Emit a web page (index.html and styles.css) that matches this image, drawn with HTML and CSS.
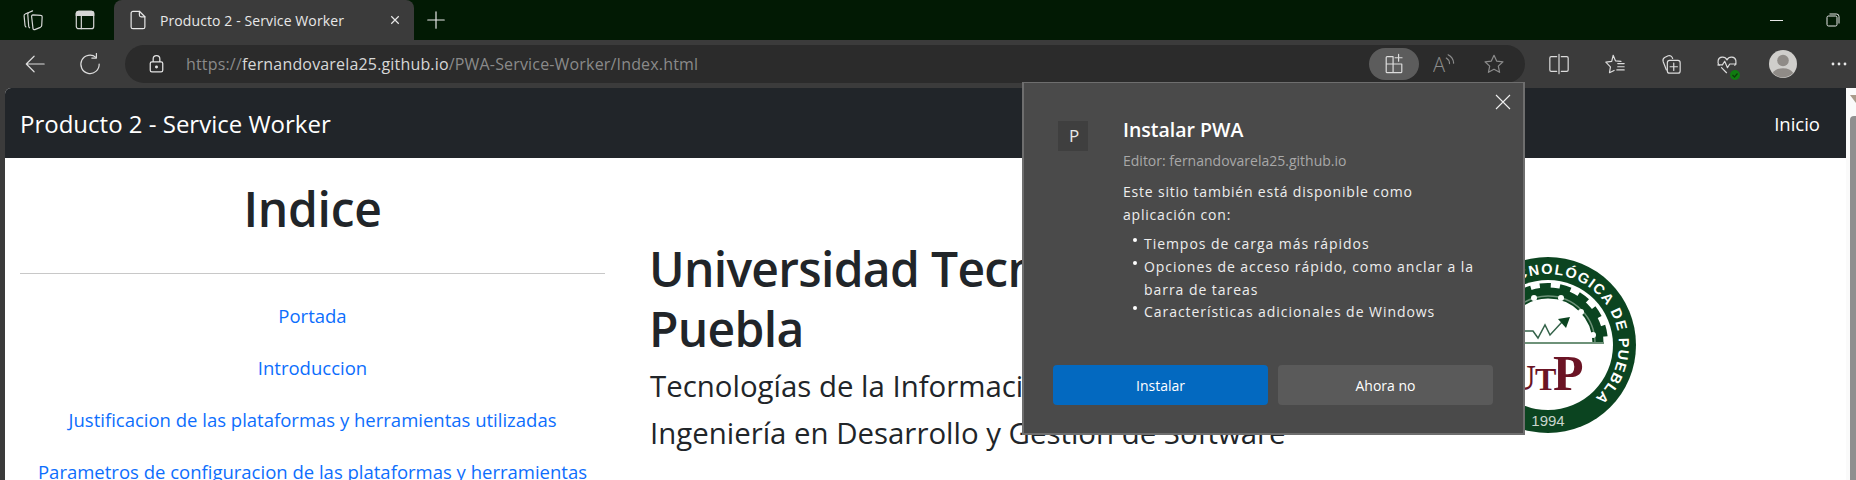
FILE: index.html
```html
<!DOCTYPE html>
<html lang="es">
<head>
    <meta charset="UTF-8">
    <meta name="viewport" content="width=device-width, initial-scale=1.0">
    <title>Producto 2 - Service Worker</title>
    <link rel="stylesheet" href="styles.css">
</head>
<body>
    <!-- Title bar -->
    <div class="titlebar">
        <button class="bar-btn">
            <svg class="icon" viewBox="0 0 24 24"><path d="M7 4 3.500 5.500c-1 .4-1.300 1-1.200 2l1 10.500c.1.800.4 1.200 1 1.600"/><path d="M11.500 2 7.500 3.800c-1 .4-1.300 1-1.200 2l1 13c.1.800.4 1.300 1 1.700"/><path d="M12 6.500l8.500.5c1 0 1.500.6 1.500 1.500l-.5 9.500c0 1-.5 1.500-1.500 2l-6 2.500c-1 .3-1.800-.2-2-1.200L10.500 8.500c-.1-1.200.4-2 1.500-2z"/></svg>
        </button>
        <button class="bar-btn">
            <svg class="icon" viewBox="0 0 24 24"><rect x="2.500" y="2.500" width="19" height="19" rx="2.500"/><path d="M2.500 7h19V5A2.500 2.500 0 0 0 19 2.500H5A2.500 2.500 0 0 0 2.500 5z" fill="currentColor"/><path d="M8 7v14.500"/></svg>
        </button>
        <div class="tab">
            <svg class="icon tab-icon" viewBox="0 0 24 24"><path d="M6.500 2.500h7l6 6v11a2 2 0 0 1-2 2h-11a2 2 0 0 1-2-2v-15a2 2 0 0 1 2-2z"/><path d="M13.500 2.500v4a2 2 0 0 0 2 2h4"/></svg>
            <span class="tab-title">Producto 2 - Service Worker</span>
            <svg class="tab-close" viewBox="0 0 12 12"><path d="M1.500 1.500l9 9M10.500 1.500l-9 9"/></svg>
        </div>
        <button class="new-tab">
            <svg class="icon" viewBox="0 0 24 24"><path d="M12 3v18M3 12h18"/></svg>
        </button>
        <div class="window-btns">
            <div class="win-btn"><span class="win-min"></span></div>
            <div class="win-btn">
                <svg class="win-restore" viewBox="0 0 14 14"><rect x="1" y="3" width="10" height="10" rx="1.500"/><path d="M3.500 1h7A2.500 2.500 0 0 1 13 3.500v7"/></svg>
            </div>
        </div>
    </div>

    <!-- Toolbar -->
    <div class="toolbar">
        <button class="tool-btn back">
            <svg class="icon" viewBox="0 0 24 24"><path d="M22 12H2.500M11 3.500 2.500 12l8.500 8.500"/></svg>
        </button>
        <button class="tool-btn">
            <svg class="icon" viewBox="0 0 24 24"><path d="M18.500 4.800A10 10 0 1 0 22 12"/><path d="M19 .5v5h-5"/></svg>
        </button>
        <div class="address">
            <svg class="lock" viewBox="0 0 20 24"><rect x="2.500" y="9.500" width="15" height="12" rx="2"/><path d="M6 9.500V6a4 4 0 0 1 8 0v3.500"/><circle cx="10" cy="15.500" r="1" fill="currentColor"/></svg>
            <div class="url"><span class="url-dim">https://</span>fernandovarela25.github.io<span class="url-dim">/PWA-Service-Worker/Index.html</span></div>
            <div class="address-tools">
                <button class="addr-btn active">
                    <svg class="icon" viewBox="0 0 24 24"><path d="M11 4H4.500a1 1 0 0 0-1 1v15.500a1 1 0 0 0 1 1h15a1 1 0 0 0 1-1V12H3.500M11 4v17.500"/><path d="M17 1.500v7.500M13.200 5.200h7.600"/></svg>
                </button>
                <button class="addr-btn dim">
                    <svg class="icon" viewBox="0 0 24 24"><text class="aloud-a" x="0" y="21">A</text><path d="M14.500 5.500a7 7 0 0 1 3.500 6M16.500 2a11 11 0 0 1 6 9"/></svg>
                </button>
                <button class="addr-btn dim">
                    <svg class="icon" viewBox="0 0 24 24"><path d="M12 2.500l2.900 6.300 6.900.8-5.100 4.700 1.400 6.800-6.100-3.400-6.100 3.400 1.400-6.800-5.100-4.700 6.900-.8z"/></svg>
                </button>
            </div>
        </div>
        <div class="tools">
            <button class="tool-btn">
                <svg class="icon" viewBox="0 0 24 24"><path d="M9.500 4H3.500a1.500 1.500 0 0 0-1.500 1.500v13A1.500 1.500 0 0 0 3.500 20h6M14.500 4h6A1.500 1.500 0 0 1 22 5.500v13a1.500 1.500 0 0 1-1.500 1.500h-6M12 1.500v21"/></svg>
            </button>
            <button class="tool-btn">
                <svg class="icon" viewBox="0 0 24 24"><path d="M10 2.500l2.500 6 6 .7M8.400 9.100 2 10l5 5.200-1 6.300 5-2.500M10 2.500 8.400 9.100M15 11.500h7M15 15h7M14 18.500h8"/></svg>
            </button>
            <button class="tool-btn">
                <svg class="icon" viewBox="0 0 24 24"><path d="M7 18.500l-3.500-9C3 8 3.500 6 5 5l4-2c2-.7 4 .2 4.800 3"/><rect x="8" y="8" width="14" height="14" rx="2.500"/><path d="M15 11v8M11 15h8"/></svg>
            </button>
            <button class="tool-btn heart-btn">
                <svg class="icon" viewBox="0 0 24 24"><path d="M3.500 13.500C1 10 2 5 6.500 4.500 9 4.200 11 5.500 12 7.500c1-2 3-3.300 5.500-3 4.500.5 5.500 5.500 3 9"/><path d="M2 13h5l2.500-4 3 7 2.500-4h7M6 16l5.500 5.500"/></svg>
                <span class="check">
                    <svg viewBox="0 0 10 10"><path d="M2.500 5l2 2 3-3.500"/></svg>
                </span>
            </button>
            <button class="tool-btn">
                <svg class="avatar" viewBox="0 0 28 28"><circle cx="14" cy="14" r="14" fill="#cfcecb"/><circle cx="14" cy="10.500" r="5.800" fill="#8f8b87"/><path d="M3.800 23a11 7.500 0 0 1 20.400 0A14 14 0 0 1 3.800 23z" fill="#8f8b87"/></svg>
            </button>
            <button class="tool-btn">
                <svg class="dots" viewBox="0 0 16 4"><circle cx="2" cy="2" r="1.400"/><circle cx="8" cy="2" r="1.400"/><circle cx="14" cy="2" r="1.400"/></svg>
            </button>
        </div>
    </div>

    <!-- Page -->
    <div class="viewport">
        <div class="page">
            <nav class="navbar">
                <a class="brand">Producto 2 - Service Worker</a>
                <a class="nav-link">Inicio</a>
            </nav>
            <div class="content">
                <aside class="sidebar">
                    <h2 class="sidebar-title">Indice</h2>
                    <hr class="divider">
                    <ul class="index">
                        <li><a>Portada</a></li>
                        <li><a>Introduccion</a></li>
                        <li><a>Justificacion de las plataformas y herramientas utilizadas</a></li>
                        <li><a>Parametros de configuracion de las plataformas y herramientas</a></li>
                    </ul>
                </aside>
                <main class="cover">
                    <div class="cover-text">
                        <h1>Universidad Tecnológica de Puebla</h1>
                        <h3 class="first">Tecnologías de la Información</h3>
                        <h3>Ingeniería en Desarrollo y Gestión de Software</h3>
                    </div>
                    <svg class="logo" viewBox="0 0 176 176">
                        <defs>
                            <path id="ringText" d="M 40.500 35.200 A 71 71 0 1 1 123.500 149.500"/>
                            <clipPath id="upperHalf"><rect x="0" y="0" width="176" height="86"/></clipPath>
                        </defs>
                        <circle cx="88" cy="88" r="88" fill="#0b4420"/>
                        <circle cx="88" cy="88" r="65" fill="#fff"/>
                        <g class="logo-gear" clip-path="url(#upperHalf)">
                            <circle cx="88" cy="86" r="50" stroke-width="11"/>
                            <circle cx="88" cy="86" r="57" stroke-width="6" stroke-dasharray="11 9"/>
                        </g>
                        <path class="logo-dots" d="M41 86a47 47 0 0 1 94 0"/>
                        <circle cx="74" cy="41" r="3" fill="#fff"/>
                        <circle cx="101" cy="41" r="3" fill="#fff"/>
                        <circle cx="121" cy="55" r="3" fill="#fff"/>
                        <circle cx="133" cy="78" r="3" fill="#fff"/>
                        <rect x="22" y="85" width="122" height="2" fill="#6e9279"/>
                        <path class="logo-line" d="M40 74h33l5 7 7-13 5 10 12-13"/>
                        <path d="M110 60l-12 2 8 9z" fill="#0b4420"/>
                        <text class="logo-utp" x="50" y="133" font-size="36">U</text>
                        <text class="logo-utp" x="75" y="133" font-size="32">T</text>
                        <text class="logo-utp" x="93" y="133" font-size="50">P</text>
                        <text class="logo-ring"><textPath href="#ringText">TECNOLÓGICA DE PUEBLA</textPath></text>
                        <text class="logo-year" x="88" y="169">1994</text>
                    </svg>
                </main>
            </div>
        </div>
        <div class="scrollbar">
            <span class="scroll-arrow"></span>
            <span class="scroll-thumb"></span>
        </div>
    </div>

    <!-- Install popup -->
    <div class="popup">
        <svg class="popup-close" viewBox="0 0 16 16"><path d="M1 1l14 14M15 1L1 15"/></svg>
        <div class="popup-body">
            <div class="app-tile">P</div>
            <div class="popup-text">
                <div class="popup-title">Instalar PWA</div>
                <div class="popup-editor">Editor: fernandovarela25.github.io</div>
                <p class="popup-desc">Este sitio también está disponible como aplicación con:</p>
                <ul class="popup-list">
                    <li>Tiempos de carga más rápidos</li>
                    <li>Opciones de acceso rápido, como anclar a la barra de tareas</li>
                    <li>Características adicionales de Windows</li>
                </ul>
            </div>
        </div>
        <div class="popup-actions">
            <button class="btn btn-primary">Instalar</button>
            <button class="btn btn-secondary">Ahora no</button>
        </div>
    </div>
</body>
</html>
```

FILE: styles.css
```css
* {
    margin: 0;
    padding: 0;
    box-sizing: border-box;
}
body {
    width: 1856px;
    height: 480px;
    overflow: hidden;
    position: relative;
    background-color: #3b3b3b;
    font-family: "Open Sans", sans-serif;
    color: #212529;
}
button {
    background: none;
    border: none;
    color: inherit;
    font-family: inherit;
}
.icon {
    width: 22px;
    height: 22px;
    fill: none;
    stroke: currentColor;
    stroke-width: 1.3;
    stroke-linecap: round;
    stroke-linejoin: round;
}

/* Title bar */
.titlebar {
    display: flex;
    align-items: stretch;
    height: 40px;
    padding-left: 7px;
    background-color: #021a04;
    color: #d6d6d6;
}
.bar-btn {
    display: flex;
    justify-content: center;
    align-items: center;
    width: 52px;
}
.tab {
    display: flex;
    align-items: center;
    width: 300px;
    margin-left: 3px;
    padding-left: 13px;
    background-color: #3b3b3b;
    border-radius: 8px 8px 0 0;
    color: #e8e8e8;
}
.tab-icon {
    width: 22px;
    height: 22px;
}
.tab-title {
    width: 210px;
    margin-left: 11px;
    font-size: 14px;
    letter-spacing: 0.1px;
    white-space: nowrap;
}
.tab-close {
    width: 10px;
    height: 10px;
    margin-left: 20px;
    fill: none;
    stroke: #e8e8e8;
    stroke-width: 1.4;
}
.new-tab {
    display: flex;
    justify-content: center;
    align-items: center;
    width: 44px;
    color: #e8e8e8;
}
.window-btns {
    display: flex;
    gap: 11px;
    margin-left: auto;
}
.win-btn {
    display: flex;
    justify-content: center;
    align-items: center;
    width: 46px;
}
.win-min {
    width: 13px;
    height: 1px;
    background-color: #e8e8e8;
}
.win-restore {
    width: 14px;
    height: 14px;
    fill: none;
    stroke: #e8e8e8;
    stroke-width: 1;
}

/* Toolbar */
.toolbar {
    display: flex;
    align-items: center;
    height: 48px;
    padding-left: 15px;
    background-color: #3b3b3b;
    color: #dcdcdc;
}
.tool-btn {
    display: flex;
    justify-content: center;
    align-items: center;
    flex: none;
    width: 40px;
    height: 40px;
}
.tool-btn.back {
    margin-right: 15px;
}
.address {
    display: flex;
    align-items: center;
    flex: none;
    width: 1400px;
    height: 38px;
    margin-left: 15px;
    padding-left: 23px;
    background-color: #2b2b2b;
    border-radius: 19px;
}
.lock {
    width: 17px;
    height: 20px;
    fill: none;
    stroke: #e4e4e4;
    stroke-width: 1.5;
    color: #e4e4e4;
}
.url {
    margin-left: 21px;
    font-size: 16px;
    letter-spacing: 0.17px;
    color: #d8d8d8;
    white-space: nowrap;
}
.url-dim {
    color: #8a8a8a;
}
.address-tools {
    display: flex;
    margin-left: auto;
    padding-right: 6px;
}
.addr-btn {
    display: flex;
    justify-content: center;
    align-items: center;
    width: 50px;
    height: 32px;
    border-radius: 16px;
}
.addr-btn.active {
    background-color: #5c5c5c;
}
.addr-btn.dim {
    color: #8c8c8c;
}
.aloud-a {
    font-size: 22px;
    font-weight: 300;
    fill: currentColor;
    stroke: none;
}
.tools {
    display: flex;
    gap: 16px;
    margin-left: 14px;
}
.heart-btn {
    position: relative;
}
.check {
    position: absolute;
    right: 7px;
    bottom: 4px;
    width: 10px;
    height: 10px;
    background-color: #107c10;
    border-radius: 50%;
}
.check svg {
    display: block;
    fill: none;
    stroke: #0b3d0b;
    stroke-width: 1.2;
}
.avatar {
    width: 28px;
    height: 28px;
}
.dots {
    width: 16px;
    height: 4px;
    fill: #e8e8e8;
}

/* Page */
.viewport {
    display: flex;
    height: 392px;
    padding-left: 5px;
}
.page {
    width: 841px;
    flex: 1;
    overflow: hidden;
    background: white;
    border-top-left-radius: 6px;
}
.navbar {
    display: flex;
    justify-content: space-between;
    align-items: center;
    height: 70px;
    padding: 0 26px 0 15px;
    background-color: #212529;
    color: white;
}
.brand {
    font-size: 24px;
}
.nav-link {
    font-size: 18.500px;
}
.content {
    display: flex;
}
.sidebar {
    flex: none;
    width: 615px;
    padding: 21px 15px 0;
    text-align: center;
}
.sidebar-title {
    font-size: 48px;
    font-weight: 600;
    letter-spacing: -0.300px;
    line-height: 60px;
}
.divider {
    margin: 34px 0 16px;
    border: none;
    border-top: 1px solid #c8c8c8;
}
.index {
    list-style: none;
}
.index li {
    height: 52px;
    line-height: 52px;
    font-size: 18.500px;
    color: #0d6efd;
    white-space: nowrap;
}
.cover {
    display: flex;
    align-items: flex-start;
    padding: 81px 0 0 29px;
}
.cover-text {
    flex: none;
    width: 660px;
}
.cover-text h1 {
    font-size: 48px;
    font-weight: 600;
    letter-spacing: -0.700px;
    line-height: 60px;
}
.cover-text h3 {
    margin-left: 1px;
    font-size: 29.400px;
    font-weight: 400;
    line-height: 47px;
    white-space: nowrap;
}
.cover-text h3.first {
    margin-top: 4px;
}
.logo {
    flex: none;
    width: 176px;
    height: 176px;
    margin: 18px 0 0 151px;
}
.logo-gear circle {
    fill: none;
    stroke: #0b4420;
}
.logo-dots {
    fill: none;
    stroke: #6e9279;
    stroke-width: 1.500;
}
.logo-line {
    fill: none;
    stroke: #35634a;
    stroke-width: 1.500;
}
.logo-utp {
    font-family: "Liberation Serif", serif;
    font-weight: 700;
    fill: #6b1425;
}
.logo-ring {
    font-family: "Liberation Sans", sans-serif;
    font-size: 14.500px;
    font-weight: 700;
    letter-spacing: 1.400px;
    fill: #fff;
}
.logo-year {
    font-family: "Liberation Sans", sans-serif;
    font-size: 15px;
    text-anchor: middle;
    fill: #c8d4cc;
}
.scrollbar {
    flex: none;
    position: relative;
    width: 10px;
    background-color: #fafafa;
}
.scroll-arrow {
    position: absolute;
    top: 7px;
    right: 0;
    border-style: solid;
    border-width: 0 6px 8px 0;
    border-color: transparent #a89a8a transparent transparent;
}
.scroll-thumb {
    position: absolute;
    top: 28px;
    bottom: 0;
    right: 0;
    width: 6px;
    background-color: #8f8f8f;
    border-top-left-radius: 4px;
}

/* Install popup */
.popup {
    position: absolute;
    top: 82px;
    left: 1022px;
    width: 503px;
    height: 353px;
    display: flex;
    flex-direction: column;
    background-color: #4a4a4a;
    border: 2px solid #6e6e6e;
    border-top-width: 1px;
    color: white;
}
.popup-close {
    position: absolute;
    top: 11px;
    right: 12px;
    width: 16px;
    height: 16px;
    fill: none;
    stroke: #f0f0f0;
    stroke-width: 1.100;
}
.popup-body {
    display: flex;
    align-items: flex-start;
    padding: 33px 0 0 34px;
}
.app-tile {
    flex: none;
    width: 30px;
    height: 30px;
    margin-top: 5px;
    padding-left: 2px;
    background-color: #3f3f3f;
    font-size: 17px;
    line-height: 30px;
    text-align: center;
    color: #e8e8e8;
}
.popup-text {
    margin-left: 35px;
}
.popup-title {
    font-size: 19.500px;
    font-weight: 600;
    line-height: 28px;
}
.popup-editor {
    margin-top: 6px;
    font-size: 14px;
    line-height: 22px;
    color: #a8a8a8;
}
.popup-desc {
    width: 330px;
    margin-top: 8px;
    font-size: 14px;
    letter-spacing: 0.800px;
    line-height: 23px;
    color: #eeeeee;
}
.popup-list {
    width: 360px;
    margin-top: 7px;
    padding-left: 21px;
    font-size: 14px;
    letter-spacing: 0.950px;
    line-height: 22.800px;
    color: #eeeeee;
    list-style: none;
}
.popup-list li {
    position: relative;
}
.popup-list li::before {
    content: "";
    position: absolute;
    top: 5px;
    left: -11px;
    width: 4px;
    height: 4px;
    background-color: white;
    border-radius: 50%;
}
.popup-actions {
    display: flex;
    gap: 10px;
    margin-top: auto;
    padding: 0 30px 28px 29px;
}
.btn {
    flex: 1;
    height: 40px;
    border-radius: 4px;
    color: white;
    font-size: 14px;
    font-weight: 500;
}
.btn-primary {
    background-color: #0369c0;
}
.btn-secondary {
    background-color: #5a5a5a;
}
```
